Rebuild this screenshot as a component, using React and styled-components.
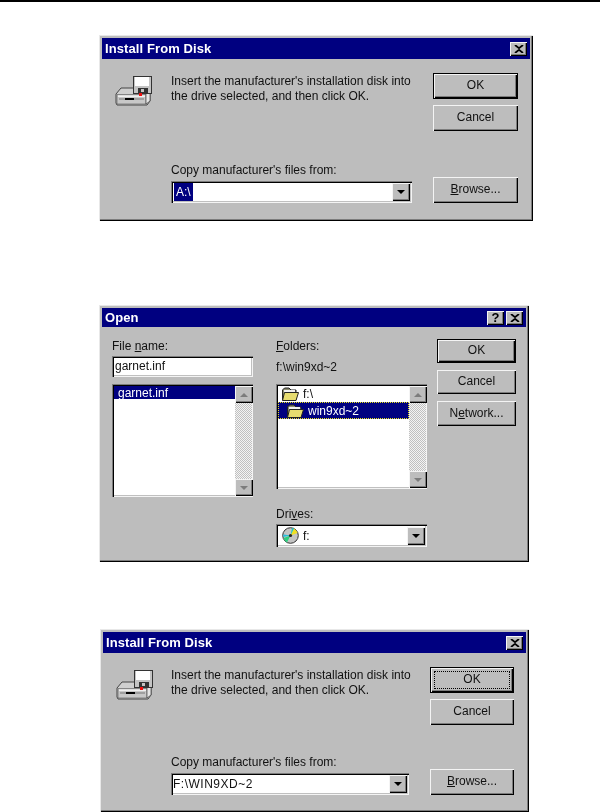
import styled, { createGlobalStyle } from 'styled-components'

const GlobalStyle = createGlobalStyle`
  html, body {
    margin: 0;
    padding: 0;
    background: #fff;
  }
  body {
    font-family: "Liberation Sans", Arial, sans-serif;
    font-size: 12px;
    color: #111;
  }
`

const raised = `
  box-shadow: inset 1px 1px 0 #f4f4f4, inset -1px -1px 0 #000, inset -2px -2px 0 #7c7c7c;
`
const sunken = `
  box-shadow: inset 1px 1px 0 #7c7c7c, inset 2px 2px 0 #000, inset -1px -1px 0 #f4f4f4, inset -2px -2px 0 #c0c0c0;
`

const Page = styled.div`
  width: 608px;
  height: 812px;
  overflow: hidden;
`

const Rule = styled.div`
  width: 600px;
  height: 2px;
  background: #000;
`

const Dialog = styled.div`
  box-sizing: border-box;
  width: ${p => p.$width}px;
  height: ${p => p.$height}px;
  margin: ${p => p.$top}px 0 0 ${p => p.$left}px;
  padding: 3px;
  background: #bdbdbd;
  box-shadow: inset 1px 1px 0 #e8e8e8, inset -1px -1px 0 #000, inset -2px -2px 0 #7c7c7c;
  filter: blur(0.4px);
`

const TitleBar = styled.div`
  display: flex;
  align-items: center;
  gap: 2px;
  height: ${p => p.$height}px;
  padding: 0 3px;
  background: #000080;
`

const TitleText = styled.div`
  flex: 1;
  color: #fff;
  font-weight: 700;
  font-size: 13px;
  letter-spacing: 0.1px;
`

const CaptionButton = styled.div`
  box-sizing: border-box;
  display: flex;
  align-items: center;
  justify-content: center;
  width: 17px;
  height: 14px;
  background: #bdbdbd;
  color: #000;
  font-size: 13px;
  font-weight: 700;
  ${raised}
`

const InstallBody = styled.div`
  box-sizing: border-box;
  display: flex;
  height: ${p => p.$height}px;
  padding: 14px 12px 15px 13px;
`

const IconColumn = styled.div`
  width: ${p => p.$width}px;
  padding-top: 2px;
`

const MainColumn = styled.div`
  display: flex;
  flex-direction: column;
  justify-content: space-between;
  width: ${p => p.$width}px;
  margin-right: 21px;
`

const Message = styled.div`
  padding-top: 1px;
  line-height: 15px;
  white-space: nowrap;
`

const FieldLabel = styled.div`
  height: ${p => p.$height || 17}px;
  line-height: 15px;
  white-space: nowrap;
`

const Combo = styled.div`
  box-sizing: border-box;
  display: flex;
  align-items: center;
  height: ${p => p.$height}px;
  padding: 2px 2px 2px 3px;
  background: #fff;
  ${sunken}
`

const ComboValue = styled.div`
  flex: 1;
  display: flex;
  align-items: center;
  gap: 4px;
  padding-left: ${p => p.$indent || 0}px;
`

const Selected = styled.span`
  padding: 2px 2px;
  background: #000080;
  color: #fff;
`

const PathValue = styled.span`
  margin-left: -1px;
  letter-spacing: 0.5px;
`

const ArrowButton = styled.div`
  box-sizing: border-box;
  display: flex;
  align-items: center;
  justify-content: center;
  flex: none;
  width: 18px;
  height: ${p => p.$height || 18}px;
  background: #bdbdbd;
  ${raised}
`

const ArrowDown = styled.div`
  width: 0;
  height: 0;
  border-left: 4px solid transparent;
  border-right: 4px solid transparent;
  border-top: 4px solid ${p => (p.$muted ? '#7c7c7c' : '#000')};
`

const ArrowUp = styled.div`
  width: 0;
  height: 0;
  border-left: 4px solid transparent;
  border-right: 4px solid transparent;
  border-bottom: 4px solid #7c7c7c;
`

const ButtonColumn = styled.div`
  display: flex;
  flex-direction: column;
  width: ${p => p.$width}px;
  gap: ${p => p.$gap || 6}px;
`

const Button = styled.div`
  box-sizing: border-box;
  display: flex;
  align-items: center;
  justify-content: center;
  position: relative;
  height: ${p => p.$height || 26}px;
  padding-bottom: 2px;
  margin-top: ${p => (p.$push ? 'auto' : '0')};
  background: #bdbdbd;
  font-size: 12px;
  box-shadow: ${p => (p.$default
    ? 'inset 0 0 0 1px #000, inset 2px 2px 0 #f4f4f4, inset -2px -2px 0 #000, inset -3px -3px 0 #7c7c7c'
    : 'inset 1px 1px 0 #f4f4f4, inset -1px -1px 0 #000, inset -2px -2px 0 #7c7c7c')};
`

const FocusRing = styled.div`
  position: absolute;
  inset: 4px;
  border: 1px dotted #000;
`

const OpenBody = styled.div`
  display: flex;
  padding: 12px 10px 0 10px;
`

const OpenColumn = styled.div`
  display: flex;
  flex-direction: column;
  width: ${p => p.$width}px;
  margin-right: ${p => p.$gap}px;
`

const TextInput = styled.div`
  box-sizing: border-box;
  height: 21px;
  line-height: 21px;
  padding-left: 3px;
  background: #fff;
  ${sunken}
`

const PathText = styled.div`
  height: 28px;
  line-height: 22px;
`

const ListBox = styled.div`
  box-sizing: border-box;
  display: flex;
  height: ${p => p.$height}px;
  margin-top: ${p => p.$top || 0}px;
  padding: 2px 1px 1px 2px;
  background: #fff;
  ${sunken}
`

const ListRows = styled.div`
  flex: 1;
  min-width: 0;
`

const ListRow = styled.div`
  box-sizing: border-box;
  display: flex;
  align-items: center;
  gap: 4px;
  height: ${p => p.$height || 13}px;
  padding-left: ${p => p.$indent || 4}px;
  color: ${p => (p.$active ? '#fff' : 'inherit')};
  background: ${p => (p.$active ? '#000080' : 'transparent')};
  border: ${p => (p.$focused ? '1px dotted #e8e020' : '0')};
`

const ScrollBar = styled.div`
  display: flex;
  flex-direction: column;
  justify-content: space-between;
  flex: none;
  width: 17px;
  background: repeating-conic-gradient(#c0c0c0 0 25%, #f4f4f4 0 50%) 0 0 / 2px 2px;
`

const DrivesGap = styled.div`
  height: 18px;
`

const CloseIcon = () => (
  <svg width="10" height="8" viewBox="0 0 10 8">
    <path d="M1 0 L5 3.2 L9 0 M1 8 L5 4.8 L9 8" fill="none" stroke="#000" strokeWidth="1.8" />
  </svg>
)

const DiskIcon = () => (
  <svg width="38" height="32" viewBox="0 0 38 32">
    <path d="M1 19 L6 13 H30 L35 17 V26 L32 30 H2 L1 28 Z" fill="#cfcfcf" stroke="#444" />
    <path d="M2 19.5 H31 V29 H2 Z" fill="#c8c8c8" stroke="#666" strokeWidth="0.7" />
    <rect x="3" y="20.5" width="27" height="1.4" fill="#f4f4f4" />
    <rect x="10" y="23" width="9" height="2" fill="#000" />
    <path d="M4 24 H10 M19 24 H29" stroke="#777" />
    <path d="M31 17 L35 17 V26 L31 29 Z" fill="#e6e6e6" stroke="#444" strokeWidth="0.7" />
    <rect x="18.5" y="1.5" width="18" height="17" fill="#c4c4c4" stroke="#333" />
    <rect x="20" y="2" width="14" height="9" fill="#fff" />
    <rect x="23" y="13" width="10" height="5" fill="#333" />
    <rect x="26" y="14" width="3" height="3" fill="#c4c4c4" />
    <rect x="24" y="18" width="3" height="3" fill="#ee1111" />
  </svg>
)

const FolderIcon = () => (
  <svg width="17" height="14" viewBox="0 0 17 14" style={{ flex: 'none' }}>
    <path d="M0.5 3 L2.5 1 H7 L9 3 H14 V13 H0.5 Z" fill="#8a8a70" stroke="#222" />
    <rect x="2" y="3" width="11" height="2" fill="#f0f0f0" />
    <path d="M2.5 5.5 H16.5 L14 13.5 H0.5 Z" fill="#e6dc70" stroke="#222" />
  </svg>
)

const CdIcon = () => (
  <svg width="17" height="17" viewBox="0 0 17 17" style={{ flex: 'none' }}>
    <circle cx="8.5" cy="8.5" r="7.8" fill="#c4c4c4" stroke="#333" />
    <path d="M8.5 8.5 L12 1.5 A7.8 7.8 0 0 1 15.5 6 Z" fill="#f0e020" />
    <path d="M8.5 8.5 L12 1.5 L10 1 Z" fill="#20c8c0" />
    <path d="M8.5 8.5 L1.5 11 A7.8 7.8 0 0 0 5 15.5 Z" fill="#30d080" />
    <path d="M8.5 8.5 L1.2 10 L1.5 7.5 Z" fill="#20c0e0" />
    <circle cx="8.5" cy="8.5" r="1.6" fill="#222" />
  </svg>
)

const InstallDialog = ({ width, height, top, left, titleHeight, bodyHeight, mainWidth, buttonWidth, iconWidth, value, focused }) => (
  <Dialog $width={width} $height={height} $top={top} $left={left}>
    <TitleBar $height={titleHeight}>
      <TitleText>Install From Disk</TitleText>
      <CaptionButton><CloseIcon /></CaptionButton>
    </TitleBar>
    <InstallBody $height={bodyHeight}>
      <IconColumn $width={iconWidth}><DiskIcon /></IconColumn>
      <MainColumn $width={mainWidth}>
        <Message>
          Insert the manufacturer's installation disk into<br />
          the drive selected, and then click OK.
        </Message>
        <div>
          <FieldLabel $height={18}>Copy manufacturer's files from:</FieldLabel>
          <Combo $height={22}>
            <ComboValue>{value}</ComboValue>
            <ArrowButton><ArrowDown /></ArrowButton>
          </Combo>
        </div>
      </MainColumn>
      <ButtonColumn $width={buttonWidth}>
        <Button $default>OK{focused && <FocusRing />}</Button>
        <Button>Cancel</Button>
        <Button $push><span><u>B</u>rowse...</span></Button>
      </ButtonColumn>
    </InstallBody>
  </Dialog>
)

const OpenDialog = () => (
  <Dialog $width={430} $height={257} $top={84} $left={99}>
    <TitleBar $height={19}>
      <TitleText>Open</TitleText>
      <CaptionButton>?</CaptionButton>
      <CaptionButton><CloseIcon /></CaptionButton>
    </TitleBar>
    <OpenBody>
      <OpenColumn $width={141} $gap={23}>
        <FieldLabel>File <u>n</u>ame:</FieldLabel>
        <TextInput>garnet.inf</TextInput>
        <ListBox $height={113} $top={7}>
          <ListRows>
            <ListRow $active>garnet.inf</ListRow>
          </ListRows>
          <ScrollBar>
            <ArrowButton $height={17}><ArrowUp /></ArrowButton>
            <ArrowButton $height={17}><ArrowDown $muted /></ArrowButton>
          </ScrollBar>
        </ListBox>
      </OpenColumn>
      <OpenColumn $width={151} $gap={10}>
        <FieldLabel><u>F</u>olders:</FieldLabel>
        <PathText>f:\win9xd~2</PathText>
        <ListBox $height={105}>
          <ListRows>
            <ListRow $height={16} $indent={4}><FolderIcon />f:\</ListRow>
            <ListRow $height={17} $indent={8} $active $focused><FolderIcon />win9xd~2</ListRow>
          </ListRows>
          <ScrollBar>
            <ArrowButton $height={17}><ArrowUp /></ArrowButton>
            <ArrowButton $height={17}><ArrowDown $muted /></ArrowButton>
          </ScrollBar>
        </ListBox>
        <DrivesGap />
        <FieldLabel>Dri<u>v</u>es:</FieldLabel>
        <Combo $height={23}>
          <ComboValue $indent={3}><CdIcon />f:</ComboValue>
          <ArrowButton><ArrowDown /></ArrowButton>
        </Combo>
      </OpenColumn>
      <ButtonColumn $width={79} $gap={7}>
        <Button $default $height={24}>OK</Button>
        <Button $height={24}>Cancel</Button>
        <Button $height={25}><span>N<u>e</u>twork...</span></Button>
      </ButtonColumn>
    </OpenBody>
  </Dialog>
)

export default function App() {
  return (
    <Page>
      <GlobalStyle />
      <Rule />
      <InstallDialog
        width={434} height={186} top={33} left={99}
        titleHeight={21} bodyHeight={159}
        iconWidth={56} mainWidth={241} buttonWidth={85}
        value={<Selected>A:\</Selected>}
      />
      <OpenDialog />
      <InstallDialog
        width={429} height={183} top={67} left={100}
        titleHeight={21} bodyHeight={157}
        iconWidth={55} mainWidth={238} buttonWidth={84}
        value={<PathValue>F:\WIN9XD~2</PathValue>}
        focused
      />
    </Page>
  )
}
